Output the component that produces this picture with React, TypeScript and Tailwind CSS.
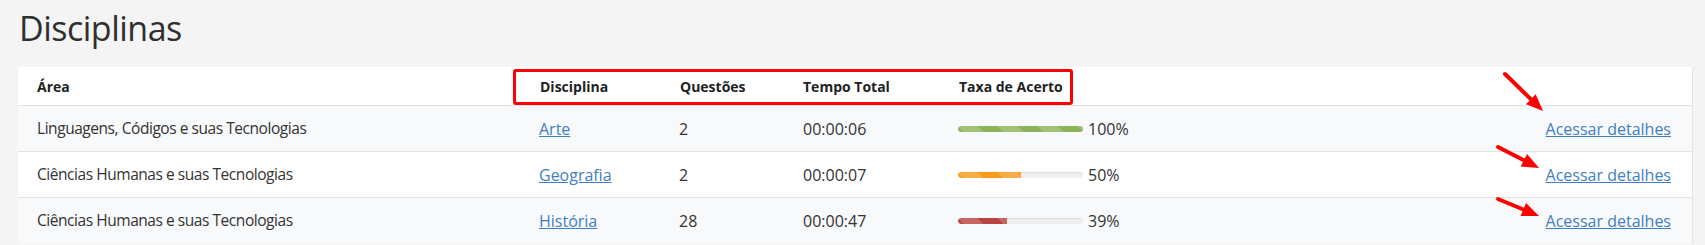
const rows = [
  { area: "Linguagens, Códigos e suas Tecnologias", disciplina: "Arte", questoes: "2", tempo: "00:00:06", taxa: 100, bar: "bg-[#8db35a]" },
  { area: "Ciências Humanas e suas Tecnologias", disciplina: "Geografia", questoes: "2", tempo: "00:00:07", taxa: 50, bar: "bg-[#f79a1e]" },
  { area: "Ciências Humanas e suas Tecnologias", disciplina: "História", questoes: "28", tempo: "00:00:47", taxa: 39, bar: "bg-[#b94543]" },
];

const cols = "grid grid-cols-[502px_140px_124px_155px_1fr_auto] items-center";

// red annotation arrow: tail -> tip
function Arrow({ x1, y1, x2, y2 }: { x1: number; y1: number; x2: number; y2: number }) {
  const dx = x2 - x1;
  const dy = y2 - y1;
  const len = Math.hypot(dx, dy);
  const ux = dx / len;
  const uy = dy / len;
  const bx = x2 - ux * 17;
  const by = y2 - uy * 17;
  const px = -uy * 7;
  const py = ux * 7;
  return (
    <g>
      <line x1={x1} y1={y1} x2={bx} y2={by} stroke="#ff0000" strokeWidth="4" strokeLinecap="round" />
      <polygon points={`${x2},${y2} ${bx + px},${by + py} ${bx - px},${by - py}`} fill="#ff0000" />
    </g>
  );
}

export default function App() {
  return (
    <div className="relative min-h-screen w-full bg-[#f4f4f4] pl-[18px] pr-[12px] pt-[6px] font-['Open_Sans',sans-serif] text-[#333]">
      <h1 className="text-[34px] leading-[44px] tracking-[-0.5px] font-normal text-[#2f2f2f] pl-px">Disciplinas</h1>

      <div className="mt-[17px] bg-white border-r border-[#e4e4e4]">
        {/* Header */}
        <div className={`${cols} h-[39px] border-b border-[#e2e2e2] text-[14px] font-bold text-[#222]`}>
          <div className="pl-[19px]">Área</div>
          <div className="pl-[20px]">Disciplina</div>
          <div className="pl-[20px]">Questões</div>
          <div className="pl-[19px]">Tempo Total</div>
          <div className="pl-[20px]">Taxa de Acerto</div>
          <div />
        </div>

        {/* Rows */}
        {rows.map((r, i) => (
          <div
            key={i}
            className={`${cols} h-[46px] text-[16px] ${i < rows.length - 1 ? "border-b border-[#e2e2e2]" : ""} ${i % 2 === 0 ? "bg-[#f8f9fa]" : "bg-white"}`}
          >
            <div className="pl-[19px] text-[15.5px] tracking-[-0.45px]">{r.area}</div>
            <div className="pl-[19px]">
              <a href="#" className="text-[#3f7fc1] underline">{r.disciplina}</a>
            </div>
            <div className="pl-[19px]">{r.questoes}</div>
            <div className="pl-[19px]">{r.tempo}</div>
            <div className="pl-[19px] flex items-center gap-[5px]">
              <div className="w-[125px] h-[6px] rounded-full bg-[#efefef] shadow-[inset_0_1px_1px_rgba(0,0,0,0.08)] overflow-hidden">
                <div
                  className={`h-full rounded-l-full ${r.bar} bg-[linear-gradient(45deg,rgba(255,255,255,.18)_25%,transparent_25%,transparent_50%,rgba(255,255,255,.18)_50%,rgba(255,255,255,.18)_75%,transparent_75%,transparent)] bg-size-[40px_40px]`}
                  style={{ width: `${r.taxa}%` }}
                />
              </div>
              <span>{r.taxa}%</span>
            </div>
            <div className="pr-[21px] text-right">
              <a href="#" className="text-[#3f7fc1] underline">Acessar detalhes</a>
            </div>
          </div>
        ))}
      </div>

      {/* Annotation overlay */}
      <div className="absolute left-[513px] top-[69px] w-[560px] h-[36px] border-[3px] border-[#ff0000] rounded-[3px] pointer-events-none" />
      <svg className="absolute left-0 top-0 pointer-events-none" width="1705" height="245">
        <Arrow x1={1505} y1={74} x2={1543} y2={111} />
        <Arrow x1={1498} y1={147} x2={1539} y2={168} />
        <Arrow x1={1498} y1={199} x2={1539} y2={216} />
      </svg>
    </div>
  );
}
